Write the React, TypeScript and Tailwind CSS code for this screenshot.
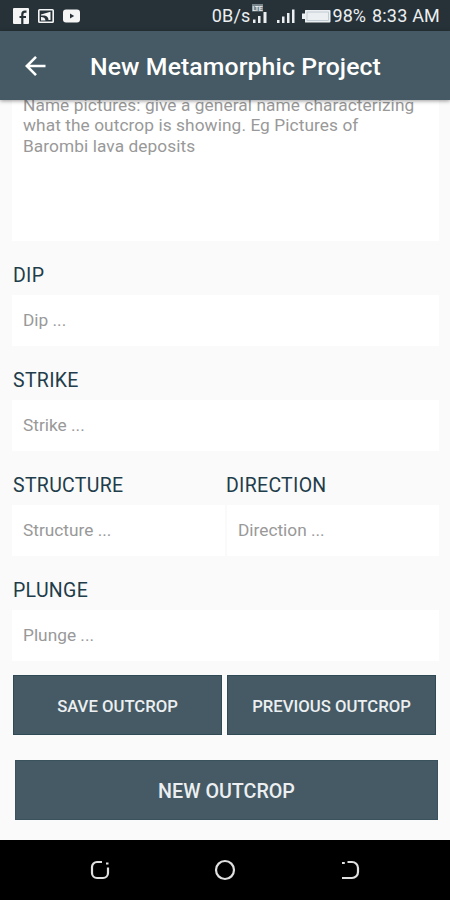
import React from "react";

const Label = ({ children }: { children: string }) => (
  <div className="flex h-[54px] items-center pt-[15px] pl-px text-[19.5px] leading-none tracking-[0.3px] text-[#1f3d4a]">
    {children}
  </div>
);

const Input = ({ placeholder }: { placeholder: string }) => (
  <input
    placeholder={placeholder}
    className="block h-[51px] w-full bg-white px-[11px] pb-[2px] text-[17.3px] text-gray-800 outline-none placeholder:text-[#999]"
  />
);

const StatusBar = () => (
  <div className="flex h-[31px] items-center justify-between bg-[#263238] pr-[10px] pl-[13px] text-[#eceff1]">
    <div className="flex items-center gap-[9px]">
      {/* facebook */}
      <svg width="16" height="16" viewBox="0 0 16 16">
        <rect width="16" height="16" rx="1" fill="#f5f5f5" />
        <path
          d="M9.3 16V6.4C9.3 4.6 10.2 3.7 12 3.7H13.5M6.5 9h6.5"
          fill="none"
          stroke="#263238"
          strokeWidth="2.2"
        />
      </svg>
      {/* screen cast */}
      <svg width="16" height="16" viewBox="0 0 16 16">
        <rect x="0.8" y="1.8" width="14.4" height="12.4" rx="0.8" fill="none" stroke="#f5f5f5" strokeWidth="1.6" />
        <path d="M3 6.5L12.5 3.8V12H10.5C10.5 9.5 9 7.8 6.5 7.5H3z" fill="#f5f5f5" />
        <path d="M3 9c2.6 0 4.2 1 4.5 3.5H3z" fill="#f5f5f5" />
      </svg>
      {/* youtube */}
      <svg width="17" height="16" viewBox="0 0 17 16">
        <rect y="1.5" width="17" height="13" rx="3" fill="#f5f5f5" />
        <path d="M7 5.5v5l4.2-2.5z" fill="#263238" />
      </svg>
    </div>
    <div className="flex items-center text-[18px] leading-none">
      <span className="tracking-[0.2px]">0B/s</span>
      <svg width="83" height="31" viewBox="1 0 83 31" fill="#eceff1">
        <rect x="2" y="4" width="11" height="7.5" fill="#78868c" />
        <text x="2.2" y="10.5" fontSize="7" fontWeight="500" textLength="10.5">
          LTE
        </text>
        <path d="M3 19.5h2.5V23H3zM8 16h2.5v7H8zM13.5 12h3v11h-3z" />
        <path d="M27 20h2.5v3H27zM32 16.5h2.5V23H32zM37 13h2.5v10H37zM42 9.5h2.5V23H42z" />
        <path d="M52 13.5h3V10.5q0-.5.5-.5h24q1 0 1 1v10.5q0 1-1 1h-24q-.5 0-.5-.5v-3h-3z" />
        <rect x="57" y="12" width="21.5" height="8.5" fill="none" stroke="#b0bec5" strokeWidth="0.7" />
      </svg>
      <span className="-ml-px">98%</span>
      <span className="ml-[6px] tracking-[0.2px]">8:33 AM</span>
    </div>
  </div>
);

const AppBar = () => (
  <header className="relative z-10 flex h-[69px] items-center bg-[#455a64] pl-[25px] text-white shadow-[0_1px_4px_rgba(0,0,0,0.4)]">
    <svg width="22" height="22" viewBox="0 0 22 22" fill="none" stroke="currentColor" strokeWidth="2.6">
      <path d="M20.5 11H2.5M11 1.8L1.8 11l9.2 9.2" />
    </svg>
    <h1 className="ml-[43px] pt-[3px] text-[24.8px] leading-none font-medium tracking-[0.1px] whitespace-nowrap">
      New Metamorphic Project
    </h1>
  </header>
);

const NavBar = () => (
  <nav className="flex h-[60px] items-center justify-between bg-black px-[90px] text-[#e0e0e0]">
    <svg width="20" height="20" viewBox="0 0 20 20" fill="none" stroke="currentColor" strokeWidth="2.2">
      <path d="M12 2H7a5 5 0 0 0-5 5v6a5 5 0 0 0 5 5h6a5 5 0 0 0 5-5V7.5M16 3.5h2.5" />
    </svg>
    <svg width="22" height="22" viewBox="0 0 22 22" fill="none" stroke="currentColor" strokeWidth="2.2">
      <circle cx="11" cy="11" r="9" />
    </svg>
    <svg width="20" height="20" viewBox="0 0 20 20" fill="none" stroke="currentColor" strokeWidth="2.2">
      <path d="M7.5 2H12a6 6 0 0 1 6 6v4a6 6 0 0 1-6 6H2M2 3h2.8" />
    </svg>
  </nav>
);

export default function App() {
  return (
    <div className="flex h-[900px] w-[450px] flex-col overflow-hidden bg-[#fafafa] font-[Roboto,sans-serif]">
      <StatusBar />
      <AppBar />
      <main className="flex h-[740px] flex-col pr-[11px] pl-[12px]">
        <div className="h-[141px] bg-white pl-[11px] text-[17.3px] leading-[20.3px] tracking-[0.08px] text-[#999]">
          <p className="relative -top-[5px] whitespace-nowrap">
            Name pictures: give a general name characterizing
            <br />
            what the outcrop is showing. Eg Pictures of
            <br />
            Barombi lava deposits
          </p>
        </div>
        <Label>DIP</Label>
        <Input placeholder="Dip ..." />
        <Label>STRIKE</Label>
        <Input placeholder="Strike ..." />
        <div className="flex">
          <div className="w-[213px]">
            <Label>STRUCTURE</Label>
            <Input placeholder="Structure ..." />
          </div>
          <div className="flex-1">
            <Label>DIRECTION</Label>
            <div className="pl-[2px]">
              <Input placeholder="Direction ..." />
            </div>
          </div>
        </div>
        <Label>PLUNGE</Label>
        <Input placeholder="Plunge ..." />
        <div className="mt-[14px] flex gap-[5px] pl-px">
          <button className="h-[60px] w-[209px] border border-[#2f4a55] bg-[#455a64] pt-[4px] text-[16.7px] font-medium text-[#eceff1]">
            SAVE OUTCROP
          </button>
          <button className="h-[60px] w-[209px] border border-[#2f4a55] bg-[#455a64] pt-[4px] text-[16.7px] font-medium text-[#eceff1]">
            PREVIOUS OUTCROP
          </button>
        </div>
        <button className="mt-[25px] mr-px ml-[3px] h-[60px] border border-[#3a525d] bg-[#455a64] pt-[4px] text-[19.7px] font-medium text-[#eceff1]">
          NEW OUTCROP
        </button>
      </main>
      <NavBar />
    </div>
  );
}
